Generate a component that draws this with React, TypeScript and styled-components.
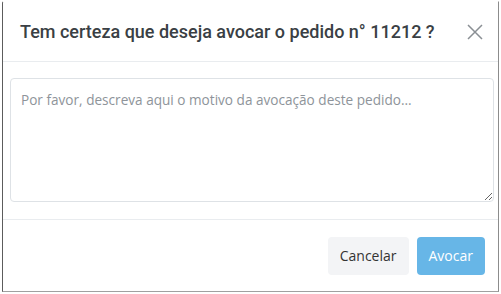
import React from 'react';
import styled, { createGlobalStyle } from 'styled-components';

const GlobalStyle = createGlobalStyle`
  html, body {
    margin: 0;
    padding: 0;
    background: #fff;
  }
  * {
    box-sizing: border-box;
  }
`;

const Modal = styled.div`
  margin: 1px 0 0 2px;
  width: 497px;
  height: 291px;
  display: flex;
  flex-direction: column;
  background: #fff;
  border-left: 1px solid #5c5c5c;
  border-right: 1px solid #8c8c8c;
  border-bottom: 1px solid #a0a0a0;
  border-top: 1px solid transparent;
  border-top-left-radius: 2px;
`;

const Header = styled.div`
  height: 60px;
  display: flex;
  align-items: center;
  justify-content: space-between;
  padding: 0 14px 0 17px;
  border-bottom: 1px solid #e9ecef;
`;

const Title = styled.h5`
  margin: 0;
  font-family: Roboto, 'Liberation Sans', sans-serif;
  font-size: 18px;
  font-weight: 500;
  color: #3a3f44;
`;

const CloseButton = styled.button`
  border: 0;
  background: transparent;
  padding: 0;
  width: 18px;
  height: 18px;
  display: flex;
  align-items: center;
  justify-content: center;
  cursor: pointer;
`;

const Body = styled.div`
  padding: 16px 4px 17px 7px;
  border-bottom: 1px solid #e9ecef;
`;

const TextArea = styled.textarea`
  display: block;
  width: 100%;
  height: 124px;
  padding: 11px 10px;
  border: 1px solid #dee2e6;
  border-radius: 4px;
  resize: vertical;
  font-family: 'Open Sans', 'Noto Sans', sans-serif;
  font-size: 13.6px;
  color: #495057;
  outline: none;

  &::placeholder {
    color: #8e949a;
  }
`;

const Footer = styled.div`
  flex: 1;
  display: flex;
  align-items: center;
  justify-content: flex-end;
  gap: 8px;
  padding: 0 13px 0 0;
`;

const Button = styled.button<{ $primary?: boolean }>`
  height: 38px;
  padding: 0 12px;
  border: 0;
  border-radius: 4px;
  font-family: 'Open Sans', 'Noto Sans', sans-serif;
  font-size: 14px;
  cursor: pointer;
  background: ${(p) => (p.$primary ? '#67b6e7' : '#f3f4f6')};
  color: ${(p) => (p.$primary ? '#fff' : '#333')};
`;

export default function App() {
  return (
    <>
      <GlobalStyle />
      <Modal>
        <Header>
          <Title>Tem certeza que deseja avocar o pedido n° 11212 ?</Title>
          <CloseButton aria-label="Fechar">
            <svg width="16" height="16" viewBox="0 0 16 16">
              <path d="M1 1L15 15M15 1L1 15" stroke="#8a8f94" strokeWidth="1.5" fill="none" />
            </svg>
          </CloseButton>
        </Header>
        <Body>
          <TextArea placeholder="Por favor, descreva aqui o motivo da avocação deste pedido..." />
        </Body>
        <Footer>
          <Button>Cancelar</Button>
          <Button $primary>Avocar</Button>
        </Footer>
      </Modal>
    </>
  );
}
